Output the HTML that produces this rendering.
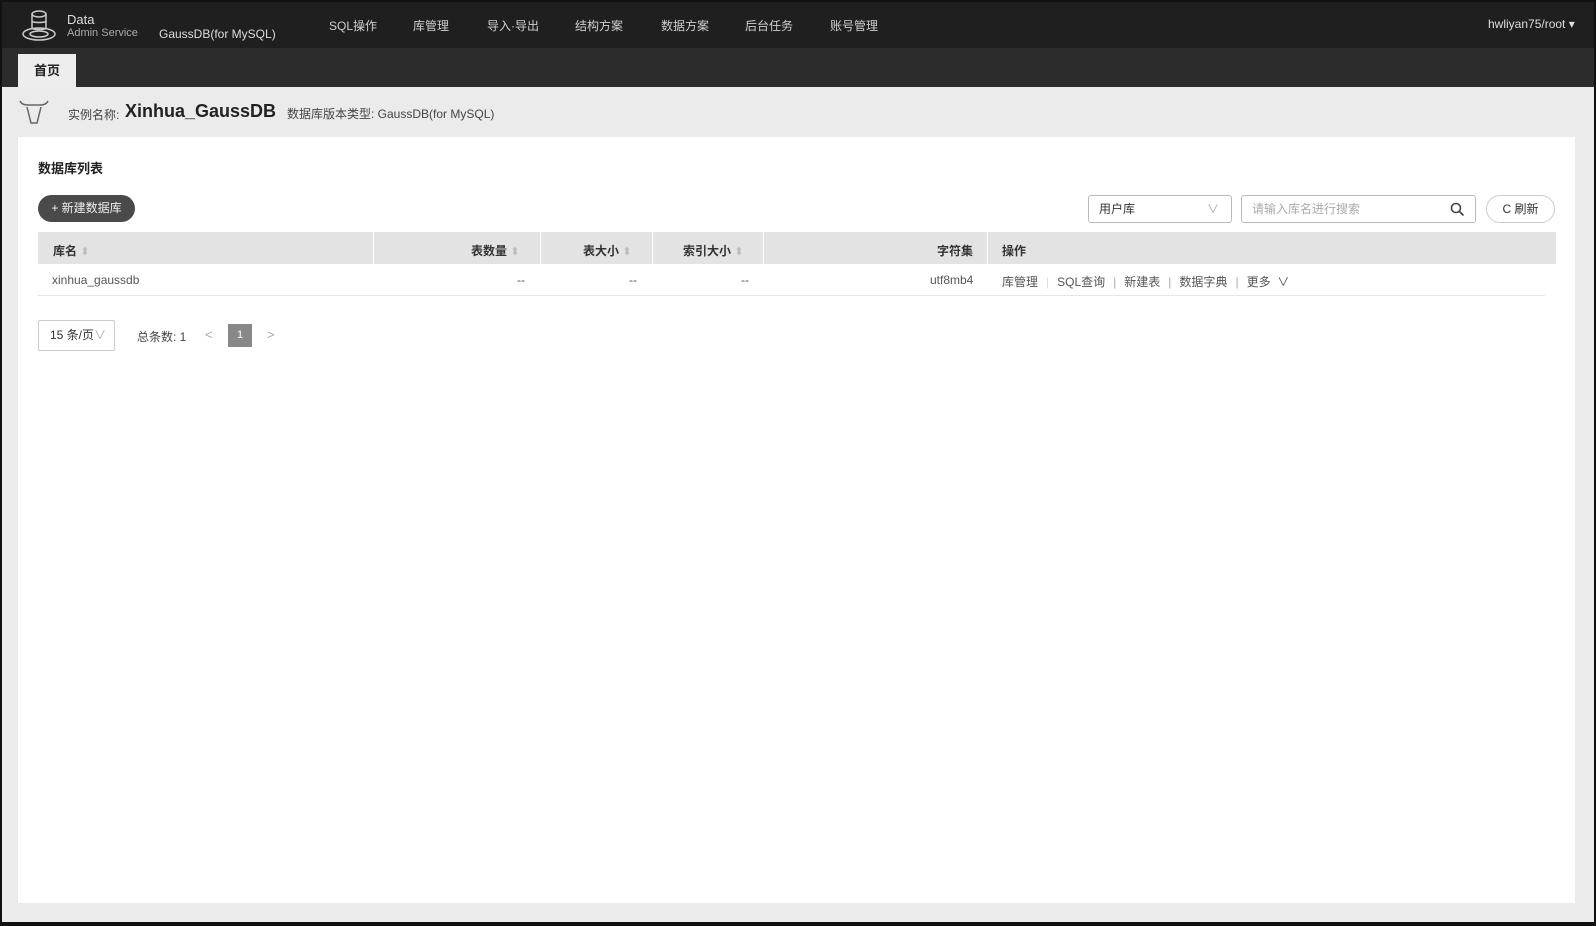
<!DOCTYPE html>
<html><head><meta charset="utf-8"><style>
*{margin:0;padding:0;box-sizing:border-box}
body{width:1596px;height:926px;background:#111;font-family:"Liberation Sans","Noto Sans CJK SC",sans-serif;color:#333;position:relative;overflow:hidden}
.a{position:absolute;white-space:nowrap}
#frame{position:absolute;left:2px;top:2px;width:1592px;height:920px;background:#ebebeb}
#top{position:absolute;left:2px;top:2px;width:1592px;height:46px;background:#1f1f1f}
#tabs{position:absolute;left:2px;top:48px;width:1592px;height:39px;background:#2c2c2c}
.nav{color:#cfcfcf;font-size:12px;top:17px}
#panel{position:absolute;left:18px;top:137px;width:1557px;height:766px;background:#fff}
.th{font-size:12px;font-weight:bold;color:#333;top:242px}
.td{font-size:12px;color:#555;top:273px}
.div{position:absolute;top:232px;width:1px;height:32px;background:#fff}
.s{color:#bbb;font-size:11px;font-weight:normal}
.sep{color:#aaa;margin:0 8px}
</style></head><body>
<div id="frame"></div>
<div id="top"></div>
<div id="tabs"></div>
<svg class="a" style="left:20px;top:9px" width="38" height="34" viewBox="0 0 38 34" fill="none" stroke="#ccc" stroke-width="1.5"><ellipse cx="19" cy="5" rx="7" ry="3"/><path d="M12 5v14c0 2 14 2 14 0V5M12 12c0 2 14 2 14 0"/><ellipse cx="19" cy="25" rx="16" ry="6"/><ellipse cx="19" cy="25" rx="9" ry="3"/></svg>
<div class="a" style="left:67px;top:12px;color:#ddd;font-size:13px">Data</div>
<div class="a" style="left:67px;top:27px;color:#aaa;font-size:11px">Admin Service</div>
<div class="a" style="left:159px;top:27px;color:#ddd;font-size:12px">GaussDB(for MySQL)</div>
<div class="a nav" style="left:329px">SQL操作</div>
<div class="a nav" style="left:413px">库管理</div>
<div class="a nav" style="left:487px">导入·导出</div>
<div class="a nav" style="left:575px">结构方案</div>
<div class="a nav" style="left:661px">数据方案</div>
<div class="a nav" style="left:745px">后台任务</div>
<div class="a nav" style="left:830px">账号管理</div>
<div class="a" style="left:1488px;top:17px;color:#ddd;font-size:12px">hwliyan75/root ▾</div>
<div class="a" style="left:18px;top:54px;width:58px;height:33px;background:#ededed;font-size:13px;font-weight:bold;text-align:center;line-height:33px;color:#222">首页</div>
<svg class="a" style="left:18px;top:99px" width="32" height="26" viewBox="0 0 32 26" fill="none" stroke="#666" stroke-width="1.5"><path d="M2 2c2 4 6 4 9 4h10c3 0 7 0 9-4M9 8l4 16h6l4-16"/></svg>
<div class="a" style="left:68px;top:106px;font-size:12px;color:#444">实例名称:</div>
<div class="a" style="left:125px;top:101px;font-size:18px;font-weight:bold;color:#222">Xinhua_GaussDB</div>
<div class="a" style="left:287px;top:105px;font-size:12px;color:#444">数据库版本类型: GaussDB(for MySQL)</div>
<div id="panel"></div>
<div class="a" style="left:38px;top:158px;font-size:13px;font-weight:bold;color:#222">数据库列表</div>
<div class="a" style="left:38px;top:195px;width:97px;height:27px;border-radius:14px;background:#4a4a4a;color:#eee;font-size:12px;line-height:27px;text-align:center">+ 新建数据库</div>
<div class="a" style="left:1088px;top:195px;width:144px;height:28px;border:1px solid #bbb;border-radius:3px;font-size:12px;line-height:26px;padding-left:10px;color:#333">用户库<span style="position:absolute;right:12px;color:#aaa">∨</span></div>
<div class="a" style="left:1241px;top:195px;width:235px;height:28px;border:1px solid #bbb;border-radius:3px;font-size:12px;line-height:26px;padding-left:10px;color:#aaa">请输入库名进行搜索
<svg style="position:absolute;right:10px;top:6px" width="15" height="15" viewBox="0 0 15 15" fill="none" stroke="#444" stroke-width="1.6"><circle cx="6" cy="6" r="4.5"/><path d="M9.5 9.5l4 4"/></svg></div>
<div class="a" style="left:1486px;top:195px;width:69px;height:28px;border:1px solid #ccc;border-radius:14px;font-size:12px;line-height:26px;text-align:center;color:#333">C 刷新</div>
<div class="a" style="left:38px;top:232px;width:1518px;height:32px;background:#e3e3e3"></div>
<div class="div" style="left:373px"></div><div class="div" style="left:540px"></div><div class="div" style="left:652px"></div><div class="div" style="left:763px"></div><div class="div" style="left:987px"></div>
<div class="a th" style="left:53px">库名 <span class="s">⬍</span></div>
<div class="a th" style="left:471px">表数量 <span class="s">⬍</span></div>
<div class="a th" style="left:583px">表大小 <span class="s">⬍</span></div>
<div class="a th" style="left:683px">索引大小 <span class="s">⬍</span></div>
<div class="a th" style="left:937px">字符集</div>
<div class="a th" style="left:1002px">操作</div>
<div class="a td" style="left:52px">xinhua_gaussdb</div>
<div class="a td" style="left:517px">--</div>
<div class="a td" style="left:629px">--</div>
<div class="a td" style="left:741px">--</div>
<div class="a td" style="left:930px">utf8mb4</div>
<div class="a td" style="left:1002px">库管理<span class="sep" style="color:#ddd">|</span>SQL查询<span class="sep">|</span>新建表<span class="sep">|</span>数据字典<span class="sep">|</span>更多 &nbsp;∨</div>
<div class="a" style="left:38px;top:295px;width:1507px;height:1px;background:#e5e5e5"></div>
<div class="a" style="left:38px;top:320px;width:77px;height:31px;border:1px solid #ccc;border-radius:2px;font-size:12px;line-height:29px;padding-left:11px;color:#333">15 条/页<span style="color:#aaa">∨</span></div>
<div class="a" style="left:137px;top:328px;font-size:12px;color:#444">总条数: 1</div>
<div class="a" style="left:205px;top:327px;font-size:13px;color:#aaa">&lt;</div>
<div class="a" style="left:228px;top:324px;width:24px;height:23px;background:#888;color:#fff;font-size:11px;text-align:center;line-height:23px">1</div>
<div class="a" style="left:267px;top:327px;font-size:13px;color:#aaa">&gt;</div>
</body></html>
